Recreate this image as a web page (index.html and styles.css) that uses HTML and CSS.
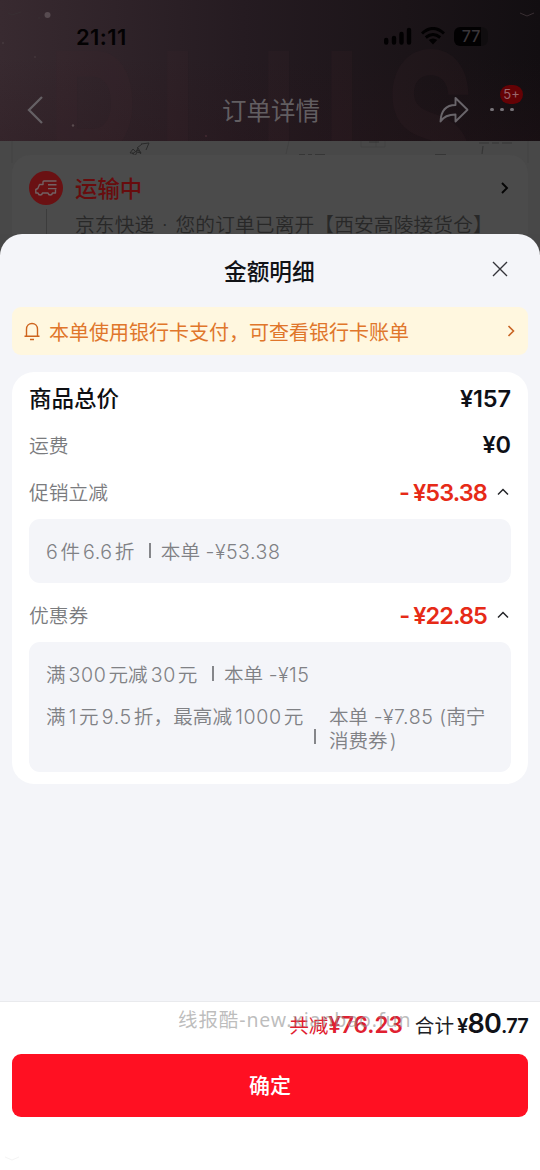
FILE: index.html
```html
<!DOCTYPE html>
<html lang="zh-CN">
<head>
<meta charset="utf-8">
<title>金额明细</title>
<link rel="stylesheet" href="styles.css">
</head>
<body>
<div class="app">
  <header class="header">
    <svg class="backdrop" width="540" height="141" viewBox="0 0 540 141" aria-hidden="true">
      <text class="plus" transform="translate(0 204) scale(1 1.5)" y="0" x="47 158 259 384">PLUS</text>
      <circle cx="47.500" cy="15" r="3" fill="#574b50"/>
      <circle cx="73" cy="125.500" r="1.200" fill="#594b4e"/>
      <circle cx="35" cy="57" r="1" fill="#43363b"/>
      <circle cx="3" cy="43" r="1.200" fill="#43363b"/>
      <circle cx="206" cy="136" r="1" fill="#432a32"/>
      <path d="M8 13l4 2 9-3M38 18h2M520 13l7 3 7-3" fill="none" stroke="#382e32"/>
    </svg>
    <div class="status">
      <span class="time">21:11</span>
      <div class="status-icons">
        <svg width="28" height="18" viewBox="0 0 28 18"><path d="M2.200 13v2.500M10 11v4.500M17.500 7v8.500M25 3v12.500" stroke="#020102" stroke-width="4.400" stroke-linecap="round"/></svg>
        <svg width="24" height="18" viewBox="0 0 24 18"><path d="M1 6.500Q12-3.500 23 6.500M4.800 10.500Q12 4.500 19.200 10.500" fill="none" stroke="#020102" stroke-width="3"/><path d="M7.800 13q4.200-3.200 8.400 0L12 17.500z" fill="#020102"/></svg>
        <span class="battery">77</span>
      </div>
    </div>
    <nav class="nav">
      <svg class="back" width="20" height="30" viewBox="0 0 20 30"><path d="M17 2L4 15l13 13" fill="none" stroke="#656064" stroke-width="2.300"/></svg>
      <h1 class="nav-title">订单详情</h1>
      <svg class="share" width="30" height="28" viewBox="0 0 30 28"><path d="M16.500 2v7C7 9 2 15 1.500 25.500 5 20 10 18.500 16.500 18.500V25.500L28.500 13.800z" fill="none" stroke="#69656a" stroke-width="1.900" stroke-linejoin="round"/></svg>
      <div class="more"><i></i><i></i><i></i><span class="badge">5+</span></div>
    </nav>
  </header>

  <section class="order">
    <svg class="map" width="540" height="22" viewBox="0 0 540 22" aria-hidden="true">
      <path d="M12 0v22M289 0l-3 13M376 0v6M385 0v6H361V0M528 0v22" fill="none" stroke="#424242"/>
      <path d="M130 12l3-4 3 3 2-4 3 5-4-1-2 4-2-3zM132 13l6-4 3 4M141 3l8-1-3 7M137 7l5-4" fill="none" stroke="#2a2a2a" stroke-width="1"/>
      <path d="M299 13.500h6m3 0h4m3 0h10M435 13.500h11M369 1h10M479 2h10m3 0h7m3 0h10M483 5l-1 8" fill="none" stroke="#363636" stroke-width="1.200"/>
    </svg>
    <div class="order-card">
      <div class="track">
        <span class="truck"><svg width="22" height="18" viewBox="0 0 22 18"><path d="M21.500 2H9q-1 0-1 1v2.500H4.500L2.800 9.500.8 10.500V14H3c.5 2.700 4 2.700 4.500 0H13c.5 2.700 4 2.700 4.500 0H20.500V10.500M13 5.800h8.500M13 9.600h8.500" fill="none" stroke="#726264" stroke-width="1.400" stroke-linejoin="round"/></svg></span>
        <span class="rail"></span>
      </div>
      <div class="order-text">
        <div class="order-state">运输中</div>
        <div class="order-desc">京东快递 <span class="dot">·</span> 您的订单已离开【西安高陵接货仓】</div>
      </div>
      <svg class="order-arrow" width="8" height="12" viewBox="0 0 8 12"><path d="M1 1l5 5-5 5" fill="none" stroke="#050505" stroke-width="1.900"/></svg>
    </div>
  </section>

  <main class="sheet">
    <div class="sheet-head">
      <h2 class="sheet-title">金额明细</h2>
      <svg class="close" width="16" height="16" viewBox="0 0 16 16"><path d="M1 1l14 14M15 1L1 15" stroke="#333439" stroke-width="1.350"/></svg>
    </div>
    <div class="notice">
      <svg width="16" height="19" viewBox="0 0 16 19"><path d="M2.500 14V7.300C2.500 3.800 5 1.500 8 1.500s5.500 2.300 5.500 5.800V14M.5 14.300h15M6 17.500h4" fill="none" stroke="#ce641d" stroke-width="1.400"/></svg>
      <span class="notice-text">本单使用银行卡支付，可查看银行卡账单</span>
      <svg class="notice-arrow" width="8" height="14" viewBox="0 0 8 14"><path d="M1.500 2l5 5-5 5" fill="none" stroke="#c96525" stroke-width="1.600"/></svg>
    </div>

    <section class="card">
      <div class="row total"><span>商品总价</span><b class="price">¥157</b></div>
      <div class="row"><span>运费</span><b class="price">¥0</b></div>
      <div class="row saving"><span>促销立减</span><b class="price red"><i class="minus">-</i>¥53.38</b><svg class="caret" width="12" height="8" viewBox="0 0 12 8"><path d="M1 6.500l5-5 5 5" fill="none" stroke="#242529" stroke-width="1.500"/></svg></div>
      <div class="detail promo">
        <div class="line"><span><em class="wide">6</em>件<em>6.6</em>折</span><i class="bar"></i><span>本单 <u>-¥53.38</u></span></div>
      </div>
      <div class="row saving coupon"><span>优惠券</span><b class="price red"><i class="minus">-</i>¥22.85</b><svg class="caret" width="12" height="8" viewBox="0 0 12 8"><path d="M1 6.500l5-5 5 5" fill="none" stroke="#242529" stroke-width="1.500"/></svg></div>
      <div class="detail coupons">
        <div class="line"><span>满<em>300</em>元减<em>30</em>元</span><i class="bar"></i><span>本单 <u>-¥15</u></span></div>
        <div class="line long"><span class="offer">满<em>1</em>元<em>9.5</em>折，最高减<em>1000</em>元</span><i class="bar"></i><span>本单 <u>-¥7.85</u><span class="paren">(</span>南宁<br>消费券<span class="paren-end">)</span></span></div>
      </div>
    </section>
  </main>

  <footer class="footer">
    <div class="sum">
      <span class="sum-off">共减</span><b class="sum-offprice">¥76.23</b>
      <span class="sum-label">合计</span><b class="sum-price"><small class="yen">¥</small>80<small class="cents">.77</small></b>
      <span class="watermark">线报酷-new.xianbao.fun</span>
    </div>
    <button class="confirm">确定</button>
    <svg class="speck" width="20" height="8" viewBox="0 0 20 8" aria-hidden="true"><path d="M1 2l7 3 7-3" fill="none" stroke="#f4f4f4"/></svg>
  </footer>
</div>
</body>
</html>
```

FILE: styles.css
```css
* { box-sizing: border-box; }
body { margin: 0; background: #474747; font-family: Inter, "Noto Sans CJK SC", sans-serif; }
.app { width: 540px; height: 1170px; display: flex; flex-direction: column; overflow: hidden; }
h1, h2 { margin: 0; }
i, em { font-style: normal; }
u { text-decoration: none; }
svg { display: block; flex: none; }
span { white-space: nowrap; }

.header { position: relative; height: 141px; flex: none; overflow: hidden; background: linear-gradient(90deg, #382a30 0%, #251b21 45%, #1b1418 75%, #120e11 100%); }
.header::before { content: ""; position: absolute; inset: 0; background: linear-gradient(180deg, transparent 40%, rgba(42, 20, 26, .25)); }
.backdrop { position: absolute; left: 0; top: 0; }
.plus { font: 700 140px Inter, sans-serif; fill: #45282f; fill-opacity: .15; }
.status { position: relative; height: 74px; padding: 26px 49px 0 76px; display: flex; justify-content: space-between; }
.time { font-size: 22px; line-height: 23px; font-weight: 600; letter-spacing: .4px; color: #030203; }
.status-icons { display: flex; gap: 8px; padding-top: 1px; margin-right: 3px; }
.status-icons svg:first-child { margin-right: 1px; }
.battery { width: 34px; height: 19px; margin-left: 1px; border-radius: 6px; background: linear-gradient(90deg, #020102 80%, #100d0f 80%); color: #3a363a; font-size: 16px; line-height: 19px; font-weight: 500; text-align: center; }
.nav { position: relative; height: 67px; display: flex; align-items: center; padding: 4px 24px 0 25px; }
.nav-title { margin-left: 177px; margin-top: 3px; width: 100px; font-size: 24.500px; line-height: 36px; font-weight: 400; color: #625e61; white-space: nowrap; }
.share { margin-left: 119px; margin-top: 0; }
.more { position: relative; margin-left: 21px; width: 27px; display: flex; gap: 6.500px; }
.more i { width: 3.600px; height: 3.600px; border-radius: 50%; background: #777378; }
.badge { position: absolute; left: 10px; top: -23px; width: 23px; height: 19px; border-radius: 10px; background: #640205; color: #99676c; font-size: 13px; line-height: 19px; text-align: center; }

.order { position: relative; flex: none; height: 93px; overflow: hidden; background: #484848; padding: 14px 12px 0; }
.map { position: absolute; left: 0; top: 0; }
.order-card { position: relative; height: 90px; border-radius: 18px 18px 0 0; background: #4b4b4b; display: flex; padding: 16px 19px 0 17px; }
.track { width: 34px; display: flex; flex-direction: column; align-items: center; }
.truck { width: 34px; height: 34px; flex: none; border-radius: 50%; background: #6a1113; display: flex; align-items: center; justify-content: center; }
.rail { width: 1px; height: 40px; margin-top: 4px; background: #3c3c3c; }
.order-text { margin-left: 12px; flex: 1; }
.order-state { font-size: 22.400px; line-height: 34px; margin-top: 1px; font-weight: 500; color: #680c0d; }
.order-desc { font-size: 19.700px; line-height: 30px; margin-top: 4px; margin-right: -20px; font-weight: 350; color: #282828; white-space: nowrap; letter-spacing: .15px; }
.dot { margin: 0 2px; }
.order-arrow { margin-top: 11px; }

.sheet { position: relative; flex: 1; background: #f4f5f9; border-radius: 22px 22px 0 0; padding: 0 12px; }
.sheet-head { height: 73px; padding: 0 20px 0 212px; display: flex; align-items: center; justify-content: space-between; }
.sheet-title { font-size: 22.700px; line-height: 34px; font-weight: 500; color: #111216; margin-top: 3px; white-space: nowrap; }
.close { margin-top: -4px; }
.notice { height: 48px; border-radius: 9px; background: #fff7df; display: flex; align-items: center; padding: 0 13px 0 12px; color: #e0762b; }
.notice-text { margin-left: 9px; margin-top: 3px; flex: 1; font-size: 20px; line-height: 30px; }
.card { margin-top: 17px; height: 412px; border-radius: 22px; background: #fff; padding: 4px 17px 0; }
.row { height: 46px; display: flex; align-items: center; font-size: 19.800px; line-height: 30px; font-weight: 350; color: #7a7b7e; }
.row > span { flex: 1; }
.row:nth-child(2) > span, .saving > span { padding-top: 2px; }
.total > span { font-size: 22.500px; font-weight: 500; color: #0e0f12; }
.price { font-family: Inter, sans-serif; font-weight: 600; font-size: 23.500px; letter-spacing: -.1px; color: #0e1016; }
.saving { height: 48px; }
.red { color: #e62a17; letter-spacing: -.9px; padding-top: 2px; }
.minus { margin-right: 4px; }
.caret { margin: -1px 2px 0 10px; }
.detail { background: #f4f5f9; border-radius: 11px; padding: 0 17px; color: #808185; font-size: 19.600px; font-weight: 350; }
.promo { height: 64px; margin-top: 3px; padding-top: 21px; }
.line { display: flex; line-height: 24px; }
.line em { margin: 0 2px; letter-spacing: .6px; }
.line u { letter-spacing: .5px; }
.line .wide { margin-left: 0; }
.line em:not(.wide) { margin-left: 3px; }
.bar { width: 1.500px; height: 15px; margin: 3px 10px 0 15px; background: #85868a; flex: none; }
.coupon { height: 59px; padding-top: 5px; }
.coupons { height: 130px; padding-top: 21px; }
.long { margin-top: 18px; }
.long .offer { letter-spacing: .12px; }
.long .bar { margin: 24px 13px 0 11px; }
.paren { margin-left: 6px; }
.paren-end { margin-left: 2px; }

.footer { position: relative; flex: none; height: 169px; background: #fff; border-top: 1px solid #e9eaed; padding: 0 12px; }
.sum { position: relative; height: 52px; display: flex; justify-content: flex-end; align-items: baseline; padding-top: 5px; }
.sum-off, .sum-label { font-size: 19.600px; line-height: 34px; }
.sum-off, .sum-offprice { color: #e02030; }
.sum-offprice { font-size: 22.500px; font-weight: 600; letter-spacing: 0; margin-right: 12px; }
.sum-label { color: #202126; margin-right: 3px; }
.sum-price { color: #101218; font-size: 27px; font-weight: 600; letter-spacing: -.8px; white-space: nowrap; }
.yen, .cents { font-size: 20px; }
.watermark { position: absolute; left: 166px; top: 4px; font-family: "Noto Sans", "Noto Sans CJK SC", sans-serif; font-size: 19.500px; line-height: 28px; color: rgba(145, 145, 145, .6); letter-spacing: .9px; }
.confirm { display: block; width: 516px; height: 63px; border: 0; border-radius: 9px; background: #ff1022; color: #fff; font: 500 21px/64px Inter, "Noto Sans CJK SC", sans-serif; padding: 0; }
.speck { margin: 38px 0 0 -8px; }
```
